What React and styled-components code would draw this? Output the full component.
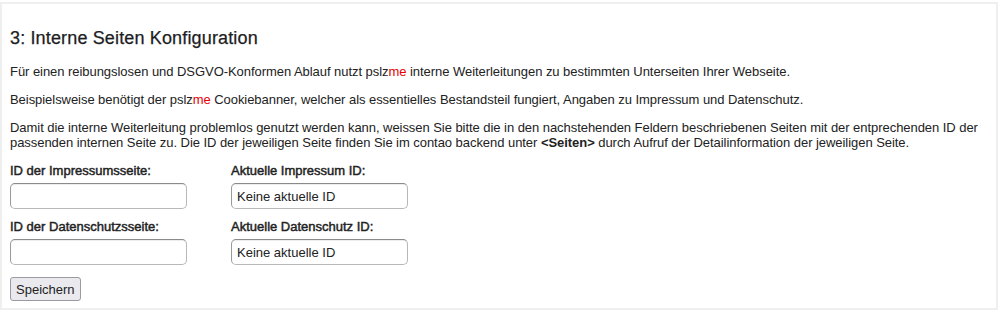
import React from "react";
import styled, { createGlobalStyle } from "styled-components";

const Global = createGlobalStyle`
  html, body { margin: 0; padding: 0; background: #fff; }
  body {
    font-family: "Liberation Sans", Arial, Helvetica, sans-serif;
    color: #222;
    font-size: 13px;
  }
`;

const Panel = styled.section`
  margin: 2px 2px 0 0;
  border: 2px solid #efefef;
  padding: 0 8px 7px 8px;
  background: #fff;
`;

const Title = styled.h3`
  margin: 24px 0 15px;
  font-size: 18px;
  line-height: 21px;
  font-weight: 400;
  letter-spacing: 0.15px;
  -webkit-text-stroke: 0.25px #1d1d1f;
  color: #1d1d1f;
`;

const Text = styled.p`
  margin: 0 0 13px;
  font-size: 13px;
  line-height: 15px;
  letter-spacing: -0.05px;
  color: #222;
`;

const Brand = styled.span`
  color: #e60000;
`;

const Strong = styled.strong`
  font-weight: 700;
`;

const Grid = styled.div`
  display: grid;
  grid-template-columns: 221px 200px;
  row-gap: 10px;
`;

const Field = styled.div`
  display: flex;
  flex-direction: column;
  gap: 5px;
`;

const Label = styled.label`
  font-size: 13px;
  line-height: 15px;
  font-weight: 400;
  -webkit-text-stroke: 0.45px #222;
  color: #222;
`;

const Input = styled.input`
  box-sizing: border-box;
  width: 177px;
  height: 26px;
  margin: 0;
  padding: 0 5px;
  font-family: inherit;
  font-size: 13px;
  color: #222;
  background: #fff;
  border: 1px solid #b8b8b8;
  border-top-color: #8a8a8a;
  border-left-color: #9a9a9a;
  border-radius: 5px;
  box-shadow: inset 0 1px 1px rgba(0, 0, 0, 0.08);
  outline: none;
  &::placeholder { color: #222; }
`;

const Button = styled.button`
  box-sizing: border-box;
  margin-top: 12px;
  height: 24px;
  padding: 0 5px;
  font-family: inherit;
  font-size: 13px;
  color: #222;
  background: #e9e9ee;
  border: 1px solid #9a9aa0;
  border-radius: 3px;
  cursor: pointer;
`;

export default function App() {
  return (
    <>
      <Global />
      <Panel>
        <Title>3: Interne Seiten Konfiguration</Title>
        <Text>
          Für einen reibungslosen und DSGVO-Konformen Ablauf nutzt pslz<Brand>me</Brand> interne
          Weiterleitungen zu bestimmten Unterseiten Ihrer Webseite.
        </Text>
        <Text>
          Beispielsweise benötigt der pslz<Brand>me</Brand> Cookiebanner, welcher als essentielles
          Bestandsteil fungiert, Angaben zu Impressum und Datenschutz.
        </Text>
        <Text>
          Damit die interne Weiterleitung problemlos genutzt werden kann, weissen Sie bitte die in den
          nachstehenden Feldern beschriebenen Seiten mit der entprechenden ID der passenden internen
          Seite zu. Die ID der jeweiligen Seite finden Sie im contao backend unter{" "}
          <Strong>&lt;Seiten&gt;</Strong> durch Aufruf der Detailinformation der jeweiligen Seite.
        </Text>
        <Grid>
          <Field>
            <Label>ID der Impressumsseite:</Label>
            <Input type="text" />
          </Field>
          <Field>
            <Label>Aktuelle Impressum ID:</Label>
            <Input type="text" placeholder="Keine aktuelle ID" />
          </Field>
          <Field>
            <Label>ID der Datenschutzsseite:</Label>
            <Input type="text" />
          </Field>
          <Field>
            <Label>Aktuelle Datenschutz ID:</Label>
            <Input type="text" placeholder="Keine aktuelle ID" />
          </Field>
        </Grid>
        <Button type="button">Speichern</Button>
      </Panel>
    </>
  );
}
